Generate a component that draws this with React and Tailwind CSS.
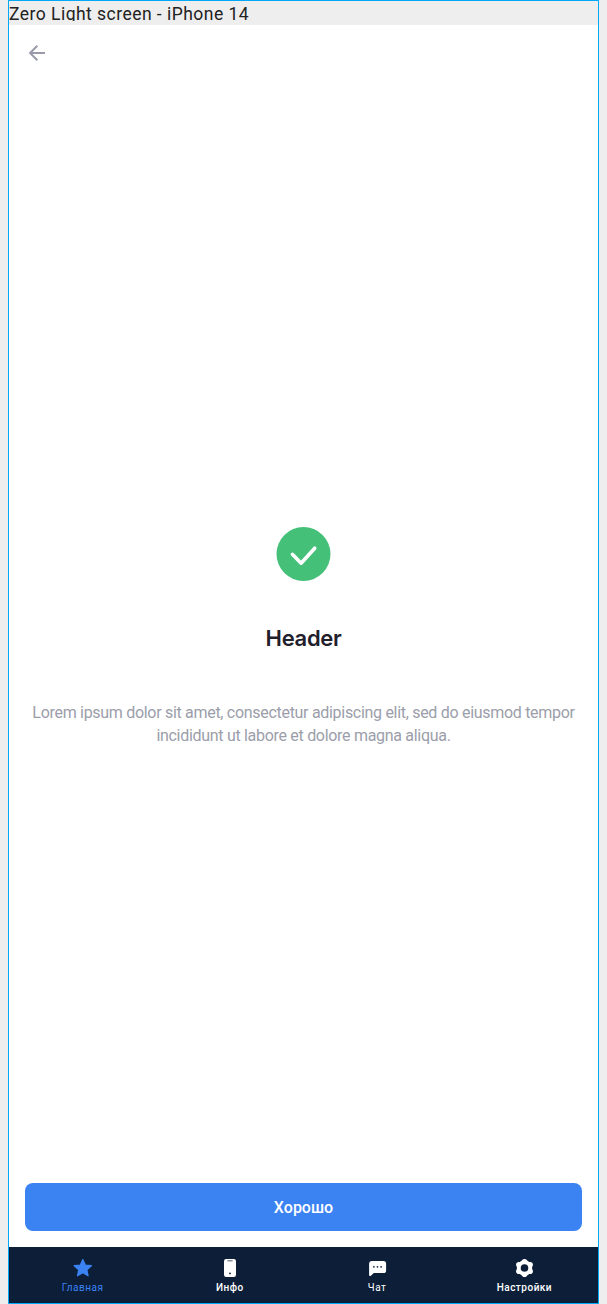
import React from "react";

function Star() {
  return (
    <svg width="20" height="20" viewBox="0 0 20 20" fill="#3b82f3" stroke="#3b82f3" strokeWidth="1.2" strokeLinejoin="round">
      <path d="M9.8 1.6l2.5 5.4 6.1.7-4.5 4.1 1.2 6-5.3-3-5.3 3 1.2-6-4.5-4.1 6.1-.7z" />
    </svg>
  );
}

function Phone() {
  return (
    <svg width="20" height="20" viewBox="0 0 20 20">
      <rect x="4" y="1" width="12" height="18" rx="2.2" fill="#fff" />
      <rect x="7.2" y="2" width="5.6" height="1.4" rx=".7" fill="#0c1e38" opacity=".5" />
      <circle cx="10" cy="15.4" r=".9" fill="#0c1e38" />
    </svg>
  );
}

function Chat() {
  return (
    <svg width="20" height="20" viewBox="0 0 20 20">
      <path d="M4.5 3h12a2.6 2.6 0 0 1 2.6 2.6v6.8a2.6 2.6 0 0 1-2.6 2.6H6.8l-2.9 2.8c-.7.6-1.8.3-1.8-.7V5.6A2.6 2.6 0 0 1 4.5 3z" fill="#fff" />
      <g fill="#0c1e38">
        <circle cx="6.9" cy="8.8" r=".85" />
        <circle cx="10.5" cy="8.8" r=".85" />
        <circle cx="14.1" cy="8.8" r=".85" />
      </g>
    </svg>
  );
}

function Gear() {
  return (
    <svg width="20" height="20" viewBox="0 0 20 20">
      <g fill="#fff">
        <circle cx="10.5" cy="10" r="7.7" />
        <circle cx="10.5" cy="3.8" r="2.8" />
        <circle cx="10.5" cy="16.2" r="2.8" />
        <circle cx="4.9" cy="6.7" r="2.8" />
        <circle cx="16.1" cy="6.7" r="2.8" />
        <circle cx="4.9" cy="13.3" r="2.8" />
        <circle cx="16.1" cy="13.3" r="2.8" />
      </g>
      <circle cx="10.5" cy="10" r="3.8" fill="#0c1e38" />
    </svg>
  );
}

const tabs = [
  { label: "Главная", Icon: Star, style: "text-[#3b82f3] font-normal tracking-[0.5px]" },
  { label: "Инфо", Icon: Phone, style: "text-white font-medium tracking-[0.5px]" },
  { label: "Чат", Icon: Chat, style: "text-white font-normal tracking-[0.6px]" },
  { label: "Настройки", Icon: Gear, style: "text-white font-medium tracking-[0.5px]" },
];

export default function App() {
  return (
    <div className="h-[1304px] w-[607px] bg-[#eeeeee] pl-2">
      <div className="flex h-full w-[591px] flex-col border border-[#00a8f8] bg-white">
        <div className="h-6 shrink-0 bg-[#eeeeee]">
          <div className="h-5 overflow-hidden whitespace-nowrap font-['Roboto',sans-serif] text-[17.5px] leading-[27px] tracking-[0.47px] text-[#222]">
            Zero Light screen - iPhone 14
          </div>
        </div>
        <header className="flex h-14 shrink-0 items-center pl-4">
          <svg width="24" height="24" viewBox="0 0 24 24" fill="none" stroke="#999ba9" strokeWidth="2">
            <path d="M20 12H5.5M12.3 4.8L5.1 12l7.2 7.2" />
          </svg>
        </header>
        <main className="flex flex-1 flex-col items-center pt-[446px] font-['Roboto',sans-serif]">
          <svg width="55" height="54" viewBox="0 0 55 54">
            <circle cx="27.5" cy="27" r="27" fill="#45c078" />
            <path d="M16.4 27.3l8.7 8.9 13.6-15" fill="none" stroke="#fff" strokeWidth="3.6" strokeLinecap="round" strokeLinejoin="round" />
          </svg>
          <h1 className="mt-[42px] font-['Inter',sans-serif] text-[22px] leading-[30px] font-semibold tracking-[-0.3px] text-[#1f202b]">Header</h1>
          <p className="mt-[48px] text-center text-[16px] leading-[23px] tracking-[-0.3px] whitespace-nowrap text-[#9b9eaa]">
            Lorem ipsum dolor sit amet, consectetur adipiscing elit, sed do eiusmod tempor
            <br />
            incididunt ut labore et dolore magna aliqua.
          </p>
        </main>
        <div className="shrink-0 px-4 pb-4">
          <button className="h-12 w-full rounded-lg bg-[#3b82f3] pt-0.5 font-['Roboto',sans-serif] text-[16px] font-medium text-white">
            Хорошо
          </button>
        </div>
        <nav className="grid h-14 shrink-0 grid-cols-4 bg-[#0c1e38] pt-[11px] font-['Roboto',sans-serif]">
          {tabs.map(({ label, Icon, style }) => (
            <div key={label} className={`flex flex-col items-center text-[10px] leading-[12px] ${style}`}>
              <Icon />
              <span className="mt-1">{label}</span>
            </div>
          ))}
        </nav>
      </div>
    </div>
  );
}
